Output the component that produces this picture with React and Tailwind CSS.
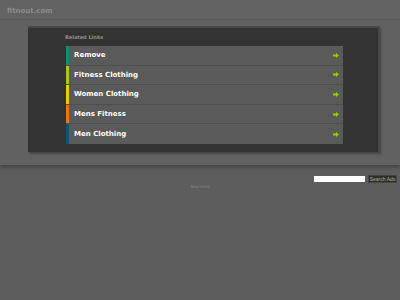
import React from 'react';

const LINKS = [
  { label: 'Remove', bar: 'bg-[#178a6e]' },
  { label: 'Fitness Clothing', bar: 'bg-[#a9c61c]' },
  { label: 'Women Clothing', bar: 'bg-[#e6cf00]' },
  { label: 'Mens Fitness', bar: 'bg-[#e9770b]' },
  { label: 'Men Clothing', bar: 'bg-[#14546a]' },
];

function Arrow() {
  return (
    <svg width="6" height="5" viewBox="0 0 6 5" className="block">
      <rect x="0" y="1.5" width="3.5" height="2" fill="#99cc00" />
      <path d="M3 0 L6 2.5 L3 5 Z" fill="#99cc00" />
    </svg>
  );
}

function LinkRow({ label, bar, last }) {
  return (
    <div className={`flex items-stretch h-[19.6px] bg-[#5a5a5a] ${last ? '' : 'border-b border-[#4f4f4f]'}`}>
      <div className={`w-[3px] ${bar}`} />
      <div className="flex-1 flex items-center justify-between pl-[5px] pr-[4px]">
        <span className="text-[7px] font-bold text-white">{label}</span>
        <Arrow />
      </div>
    </div>
  );
}

export default function App() {
  return (
    <div className="w-[400px] h-[300px] bg-[#5d5d5d] overflow-hidden font-['DejaVu_Sans',sans-serif]">
      <header className="h-[20px] bg-[#636363] border-b border-[#5a5a5a] pl-[7px] pt-[8px]">
        <span className="text-[7px] font-bold text-[#8c8c8c] leading-none block">fitnout.com</span>
      </header>

      <section className="h-[145px] bg-[#616161] pt-[6px] shadow-[0_3px_3px_rgba(0,0,0,0.25)]">
        <div className="ml-[28px] w-[352px] h-[126px] bg-[#333333] border-t-2 border-r-2 border-[#484848] shadow-[1px_2px_2px_rgba(0,0,0,0.3)] pl-[37px] pt-[7px]">
          <div className="text-[5px] font-bold text-[#8e8e8e] leading-none h-[11px]">Related Links</div>
          <div className="ml-[1px] w-[277px]">
            {LINKS.map((l, i) => (
              <LinkRow key={l.label} {...l} last={i === LINKS.length - 1} />
            ))}
          </div>
        </div>
      </section>

      <div className="flex justify-end items-center gap-[3px] pr-[3px] mt-[10px]">
        <div className="w-[51px] h-[6px] bg-white" />
        <div className="w-[29px] h-[8px] bg-[#2e2e2e] border border-[#454545] flex items-center justify-center text-[5px] leading-none text-[#a3b884] font-['Liberation_Sans',sans-serif]">
          Search Ads
        </div>
      </div>
      <div className="text-center text-[4px] leading-none text-[#8a8a8a] mt-[2px]">Searchdo</div>
    </div>
  );
}
